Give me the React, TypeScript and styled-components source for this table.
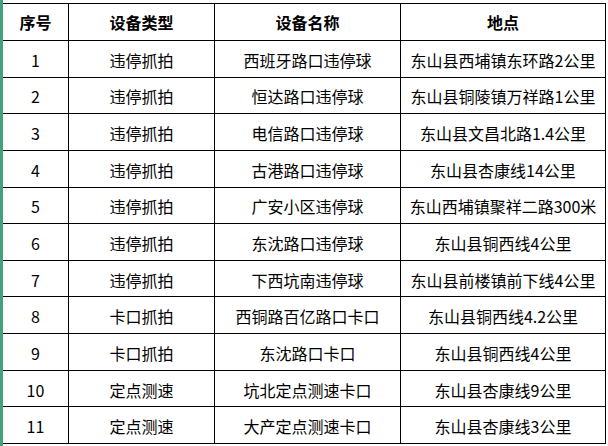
import React from 'react';
import styled, { createGlobalStyle } from 'styled-components';

const GlobalStyle = createGlobalStyle`
  html, body {
    margin: 0;
    padding: 0;
    background: #ffffff;
  }
  body {
    font-family: "Noto Sans CJK SC", "Liberation Sans", sans-serif;
  }
`;

const Page = styled.div`
  width: 608px;
  height: 446px;
  box-sizing: border-box;
  padding-top: 3px;
  border-left: 3px solid #45a07c;
  background: #ffffff;
`;

const Grid = styled.div`
  display: grid;
  grid-template-columns: 66px 146px 186px 205px;
  grid-template-rows: 37px repeat(11, 1fr);
  height: 441px;
  box-sizing: border-box;
  border-top: 1px solid #000;
  width: 603px;
`;

const Cell = styled.div<{ $head?: boolean }>`
  box-sizing: border-box;
  border-right: 1px solid #000;
  border-bottom: 1px solid #000;
  display: flex;
  align-items: center;
  justify-content: center;
  padding-top: ${(p) => (p.$head ? 0 : 2)}px;
  font-size: 16px;
  line-height: 1;
  color: #000;
  font-weight: ${(p) => (p.$head ? 700 : 400)};
  white-space: nowrap;
`;

const headers = ['序号', '设备类型', '设备名称', '地点'];

const rows: [string, string, string, string][] = [
  ['1', '违停抓拍', '西班牙路口违停球', '东山县西埔镇东环路2公里'],
  ['2', '违停抓拍', '恒达路口违停球', '东山县铜陵镇万祥路1公里'],
  ['3', '违停抓拍', '电信路口违停球', '东山县文昌北路1.4公里'],
  ['4', '违停抓拍', '古港路口违停球', '东山县杏康线14公里'],
  ['5', '违停抓拍', '广安小区违停球', '东山西埔镇聚祥二路300米'],
  ['6', '违停抓拍', '东沈路口违停球', '东山县铜西线4公里'],
  ['7', '违停抓拍', '下西坑南违停球', '东山县前楼镇前下线4公里'],
  ['8', '卡口抓拍', '西铜路百亿路口卡口', '东山县铜西线4.2公里'],
  ['9', '卡口抓拍', '东沈路口卡口', '东山县铜西线4公里'],
  ['10', '定点测速', '坑北定点测速卡口', '东山县杏康线9公里'],
  ['11', '定点测速', '大产定点测速卡口', '东山县杏康线3公里'],
];

export default function App() {
  return (
    <>
      <GlobalStyle />
      <Page>
        <Grid>
          {headers.map((h) => (
            <Cell key={h} $head>
              {h}
            </Cell>
          ))}
          {rows.map((r) =>
            r.map((v, i) => <Cell key={r[0] + '-' + i}>{v}</Cell>),
          )}
        </Grid>
      </Page>
    </>
  );
}
